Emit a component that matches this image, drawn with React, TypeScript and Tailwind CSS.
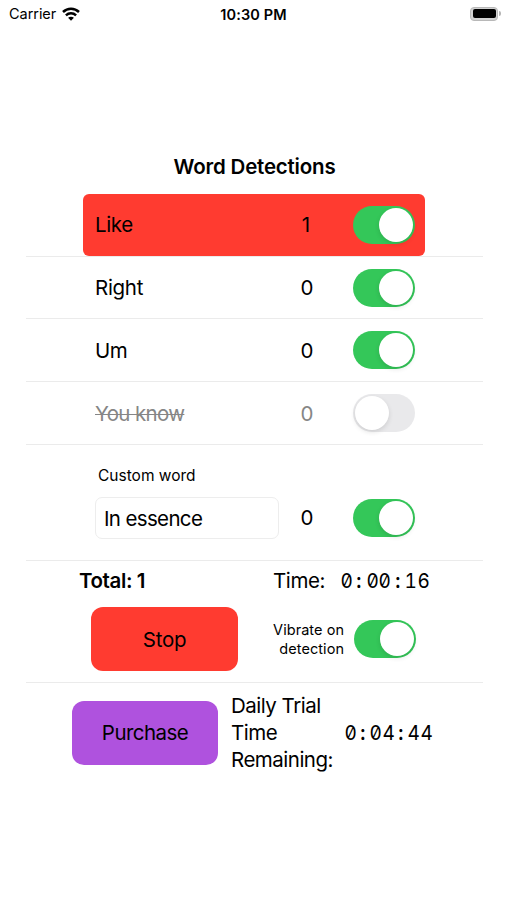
import React from "react";

function Toggle({ on }: { on: boolean }) {
  return (
    <div
      role="switch"
      aria-checked={on}
      className={
        "flex h-[38px] w-[62px] shrink-0 items-center rounded-full px-[2px] " +
        (on ? "justify-end bg-[#34c759]" : "justify-start bg-[#e9e9eb]")
      }
    >
      <div className="size-[34px] rounded-full bg-white shadow-[0_2px_5px_rgba(0,0,0,0.12)]" />
    </div>
  );
}

/* Clock digits sit in equal cells, as in a monospaced face. */
function Clock({ value }: { value: string }) {
  return (
    <span className="flex slashed-zero tabular-nums">
      {value.split("").map((c, i) => (
        <span key={i} className={"w-[12.75px] text-center " + (c === ":" ? "font-semibold" : "")}>
          <span className="inline-block scale-x-[0.93]">{c}</span>
        </span>
      ))}
    </span>
  );
}

type WordProps = { word: string; count: number; on?: boolean; hit?: boolean; spacing: string };

function WordRow({ word, count, on = true, hit = false, spacing }: WordProps) {
  return (
    <div className="ml-[26px] mr-[24px] flex h-[62.7px] border-b border-[#ebebeb] pl-[57px]">
      <div
        className={
          "flex h-[62px] w-[342px] items-center rounded-[6px] pl-[12px] pr-[10px] " +
          (hit ? "bg-[#ff3b30] pb-px " : "") +
          (on ? "text-black" : "text-[#868686]")
        }
      >
        <span className="flex-1">
          <span className={spacing + (on ? "" : " line-through decoration-1")}>{word}</span>
        </span>
        <span className={"w-[26px] text-center " + (count === 1 ? "mr-[34px]" : "mr-[33px]")}>{count}</span>
        <Toggle on={on} />
      </div>
    </div>
  );
}

function StatusBar() {
  return (
    <header className="grid h-[28px] grid-cols-3 items-center text-[14.5px]">
      <div className="flex items-center gap-[6px] pb-[2px] pl-[9px]">
        <span className="w-[47px] tracking-[-0.05px]">Carrier</span>
        <svg width="18" height="14" viewBox="0 0 18 14" fill="none" stroke="#000" strokeWidth="2.5">
          <path d="M1 5C5.5.6 12.5.6 17 5" />
          <path d="M3.9 8.3c2.9-2.7 7.3-2.7 10.2 0" />
          <path d="M9 13.7 6.1 10.7c1.5-1.4 4.3-1.4 5.8 0Z" fill="#000" stroke="none" />
        </svg>
      </div>
      <span className="whitespace-nowrap pb-px text-center font-semibold tracking-[0.1px]">10:30 PM</span>
      <div className="flex items-center justify-end gap-px pb-[2px] pr-[6px]">
        <div className="h-[14px] w-[28px] rounded-[4px] border border-[#b8b8b8] bg-[#d2d2d2] p-[1.5px]">
          <div className="h-full w-full rounded-[2px] bg-black" />
        </div>
        <div className="h-[5px] w-[2px] rounded-r-full bg-[#b5b5b5]" />
      </div>
    </header>
  );
}

export default function App() {
  return (
    <main className="h-[900px] w-[507px] overflow-hidden bg-white font-['Inter','Liberation_Sans',sans-serif] text-[20.5px] leading-[27px] text-black">
      <StatusBar />
      <h1 className="mt-[125px] pl-[2px] text-center font-semibold tracking-[-0.2px]">Word Detections</h1>

      <section className="mt-[14px]">
        <WordRow word="Like" count={1} hit spacing="tracking-[-0.4px]" />
        <WordRow word="Right" count={0} spacing="tracking-[-0.3px]" />
        <WordRow word="Um" count={0} spacing="tracking-[-0.6px]" />
        <WordRow word="You know" count={0} on={false} spacing="tracking-[-0.65px]" />
      </section>

      <section className="ml-[26px] mr-[24px] h-[116.7px] border-b border-[#ebebeb] pt-[20px]">
        <div className="ml-[72px] text-[15.5px] leading-[22px]">Custom word</div>
        <div className="ml-[69px] mt-[10px] flex items-center">
          <div className="flex h-[42px] w-[184px] items-center rounded-[7px] border border-[#ededed] pl-[8px] pt-px">
            <span className="tracking-[-0.65px]">In essence</span>
          </div>
          <span className="ml-[15px] mr-[33px] w-[26px] text-center">0</span>
          <Toggle on />
        </div>
      </section>

      <section className="ml-[26px] mr-[24px] h-[121.7px] border-b border-[#ebebeb] pt-[5.5px]">
        <div className="flex">
          <span className="ml-[53px] w-[194px] font-semibold tracking-[-0.4px]">Total: 1</span>
          <span className="w-[67px] tracking-[-0.4px]">Time:</span>
          <Clock value="0:00:16" />
        </div>
        <div className="mt-[13.5px] flex items-center">
          <button className="ml-[65px] h-[64px] w-[147px] rounded-[12px] bg-[#ff3b30] tracking-[-0.3px]">Stop</button>
          <div className="mr-[10px] w-[106px] text-right text-[14.5px] leading-[19.5px] tracking-[0.05px]">
            Vibrate on
            <br />
            detection
          </div>
          <Toggle on />
        </div>
      </section>

      <section className="flex items-center pl-[72px] pt-[9px]">
        <button className="h-[64px] w-[146px] rounded-[12px] bg-[#af52de] tracking-[-0.55px]">Purchase</button>
        <div className="ml-[13px] w-[112.5px] tracking-[-0.5px]">
          Daily Trial
          <br />
          Time
          <br />
          Remaining:
        </div>
        <Clock value="0:04:44" />
      </section>
    </main>
  );
}
